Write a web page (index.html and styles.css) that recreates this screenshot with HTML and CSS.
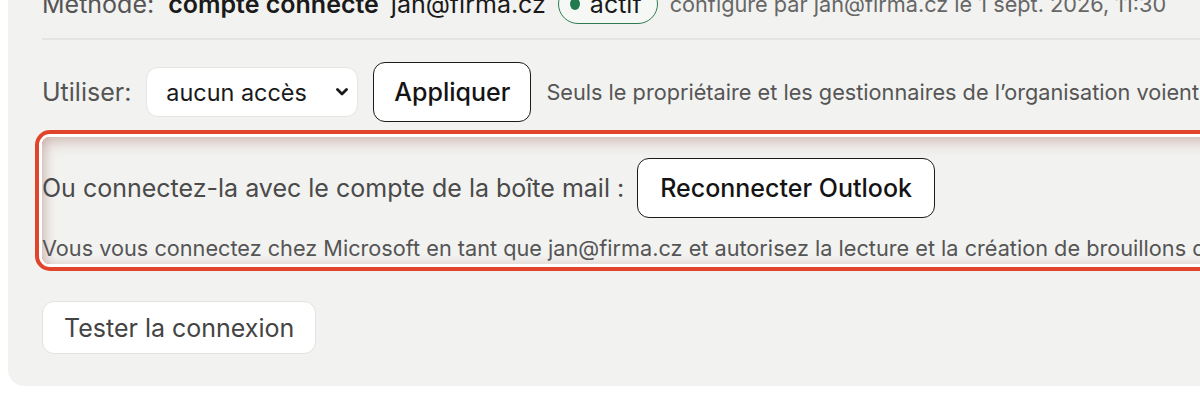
FILE: index.html
```html
<!DOCTYPE html>
<html lang="fr">
<head>
    <meta charset="UTF-8">
    <meta name="viewport" content="width=device-width, initial-scale=1.0">
    <title>Connexion de la boîte mail</title>
    <link rel="stylesheet" href="styles.css">
</head>
<body>
    <div class="card">
        <div class="meta-row">
            <span class="label">Méthode:</span>
            <strong>compte connecté</strong>
            <span class="value">jan@firma.cz</span>
            <span class="badge"><span class="dot"></span>actif</span>
            <span class="note">configuré par jan@firma.cz le 1 sept. 2026, 11:30</span>
        </div>

        <div class="use-row">
            <span class="label">Utiliser:</span>
            <div class="select-wrap">
                <select>
                    <option>aucun accès</option>
                    <option>lecture seule</option>
                    <option>brouillons</option>
                </select>
                <svg class="chevron" width="12" height="8" viewBox="0 0 12 8">
                    <path d="M1.5 1.5 L6 6 L10.5 1.5" fill="none" stroke="#1a1a1a" stroke-width="2.8" stroke-linecap="round" stroke-linejoin="round"/>
                </svg>
            </div>
            <button class="btn-outline">Appliquer</button>
            <span class="hint">Seuls le propriétaire et les gestionnaires de l’organisation voient cette boîte.</span>
        </div>

        <div class="highlight">
            <div class="connect-row">
                <span class="text">Ou connectez-la avec le compte de la boîte mail :</span>
                <button class="btn-outline">Reconnecter Outlook</button>
            </div>
            <p class="hint">Vous vous connectez chez Microsoft en tant que jan@firma.cz et autorisez la lecture et la création de brouillons dans cette boîte.</p>
        </div>

        <button class="btn-light">Tester la connexion</button>
    </div>
</body>
</html>
```

FILE: styles.css
```css
body {
    margin: 0;
    background: #fff;
    font-family: Inter, "Noto Sans", Arial, sans-serif;
    overflow: hidden;
}
.card {
    width: 1260px;
    margin: -14px 0 0 8px;
    padding: 0 0 32px 34px;
    background: #f2f2f0;
    border-bottom-left-radius: 16px;
    box-sizing: border-box;
}
.meta-row {
    display: flex;
    align-items: center;
    gap: 12px;
    height: 36px;
    padding-bottom: 16px;
    border-bottom: 2px solid #e4e4e1;
    font-size: 25px;
    white-space: nowrap;
}
.meta-row .label {
    color: #555;
}
.meta-row strong {
    color: #1a1a1a;
    font-weight: 600;
    margin-left: 2px;
}
.meta-row .value {
    color: #1a1a1a;
}
.badge {
    display: inline-flex;
    align-items: center;
    gap: 10px;
    height: 40px;
    padding: 0 15px 0 11px;
    border: 1.5px solid #2f7a56;
    border-radius: 20px;
    background: #f6f8f6;
    color: #1a1a1a;
    box-sizing: border-box;
}
.dot {
    width: 10px;
    height: 12px;
    border-radius: 50%;
    background: #1f7a4d;
}
.note {
    color: #666;
    font-size: 21.7px;
}
.use-row {
    display: flex;
    align-items: center;
    gap: 15px;
    margin-top: 22px;
    white-space: nowrap;
}
.label {
    color: #555;
    font-size: 25px;
}
.select-wrap {
    position: relative;
}
.select-wrap select {
    appearance: none;
    width: 212px;
    height: 50px;
    padding: 0 40px 0 19px;
    border: 1px solid #e6e6e3;
    border-radius: 12px;
    background: #fff;
    color: #1a1a1a;
    font-family: inherit;
    font-size: 23.4px;
}
.chevron {
    position: absolute;
    right: 10px;
    top: 21px;
    pointer-events: none;
}
.btn-outline {
    height: 60px;
    padding: 0 20px;
    border: 1.5px solid #1c1c1c;
    border-radius: 12px;
    background: #fff;
    color: #141414;
    font-family: inherit;
    font-size: 25px;
    font-weight: 500;
    cursor: pointer;
}
.hint {
    margin: 0;
    color: #555;
    font-size: 21.7px;
    white-space: nowrap;
}
.highlight {
    margin-top: 15px;
    padding: 21px 0 3px;
    border-radius: 8px;
    box-shadow: 0 0 0 3px #fff, 0 0 0 7px #e0452b, inset 0 6px 14px rgba(150, 90, 80, 0.28), inset 4px 0 10px rgba(150, 90, 80, 0.18);
}
.connect-row {
    display: flex;
    align-items: center;
    gap: 13px;
    margin-bottom: 17px;
}
.connect-row .text {
    color: #4a4a4a;
    font-size: 25px;
    white-space: nowrap;
}
.connect-row .btn-outline {
    padding: 0 22px;
}
.btn-light {
    margin-top: 37px;
    height: 53px;
    padding: 0 21px;
    border: 1px solid #e2e2df;
    border-radius: 12px;
    background: #fff;
    color: #444;
    font-family: inherit;
    font-size: 25px;
    cursor: pointer;
}
```
